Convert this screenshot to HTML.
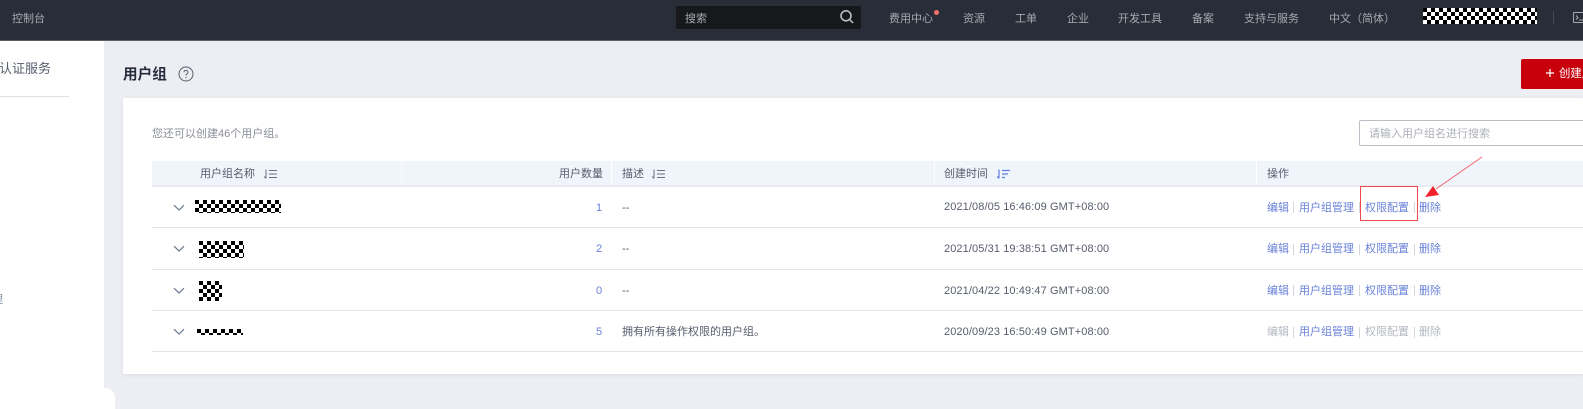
<!DOCTYPE html>
<html lang="zh-CN">
<head>
<meta charset="utf-8">
<title>用户组</title>
<style>
html,body{margin:0;padding:0}
body{width:1583px;height:409px;overflow:hidden;background:#eceef3;position:relative;font-family:"Liberation Sans","Noto Sans CJK SC",sans-serif;font-size:11px;color:#575d6c}
.a{position:absolute}
.t{position:absolute;white-space:nowrap;line-height:16px}
.nav{color:#a6a9b0;top:11px;font-size:11px}
.hd{color:#575d6c;top:166px;font-size:11px}
.ln{position:absolute;left:152px;width:1431px;height:1px;background:#e4e5e9}
.lk{color:#6a82d8}
.dis{color:#b4b8c2}
.sep{position:absolute;width:1px;height:11px;background:#d5d7dd}
.chk{position:absolute;background:conic-gradient(#fff 25%,#000 0 50%,#fff 0 75%,#000 0);background-size:8px 8px}
.num{color:#6a82d8;font-size:11px}
.blk{color:#575d6c}
.tm{letter-spacing:.1px}
</style>
</head>
<body>
<!-- Top bar -->
<div class="a" style="left:0;top:0;width:1583px;height:41px;background:#292d38;border-bottom:1px solid #5a5d66;box-sizing:border-box"></div>
<span class="t nav" style="left:12px">控制台</span>
<div class="a" style="left:676px;top:6px;width:185px;height:23px;background:#17181c;border-radius:2px"></div>
<span class="t nav" style="left:685px">搜索</span>
<svg class="a" style="left:838px;top:8px" width="18" height="18" viewBox="0 0 18 18" fill="none" stroke="#b9bcc2" stroke-width="1.6"><circle cx="8" cy="7.8" r="5"/><path d="M11.6 11.5L15 15"/></svg>
<span class="t nav" style="left:889px">费用中心</span>
<div class="a" style="left:934px;top:10px;width:5px;height:5px;border-radius:50%;background:#f66f6a"></div>
<span class="t nav" style="left:963px">资源</span>
<span class="t nav" style="left:1015px">工单</span>
<span class="t nav" style="left:1067px">企业</span>
<span class="t nav" style="left:1118px">开发工具</span>
<span class="t nav" style="left:1192px">备案</span>
<span class="t nav" style="left:1244px">支持与服务</span>
<span class="t nav" style="left:1329px">中文（简体）</span>
<div class="chk" style="left:1423px;top:8px;width:114px;height:16px"></div>
<div class="a" style="left:1553px;top:11px;width:1px;height:13px;background:#464a54"></div>
<svg class="a" style="left:1573px;top:11px" width="10" height="13" viewBox="0 0 10 13" fill="none" stroke="#a6a9b0" stroke-width="1"><path d="M.5 1.5H10M.5 11.5H10M.5 1.5V11.5M3 4.5L5 6.5L3 8.5M6 9H10"/></svg>

<!-- Sidebar -->
<div class="a" style="left:0;top:41px;width:104px;height:368px;background:#fff"></div>
<div class="a" style="left:0;top:388px;width:115px;height:21px;background:#fff;border-top-right-radius:10px"></div>
<span class="t" style="left:-1px;top:61px;font-size:13px;color:#575d6c">认证服务</span>
<div class="a" style="left:0;top:96px;width:69px;height:1px;background:#dfe1e6"></div>
<span class="t" style="left:-8px;top:292px;font-size:11px;color:#7d8aa5">理</span>

<!-- Title -->
<span class="t" style="left:123px;top:66px;font-size:14.6px;font-weight:bold;color:#252b3a;line-height:18px">用户组</span>
<svg class="a" style="left:178px;top:66px" width="16" height="16" viewBox="0 0 16 16" fill="none" stroke="#575d6c" stroke-width="1"><circle cx="8" cy="8" r="7"/><path d="M6 6.3C6 3.8 10 3.8 10 6.2C10 7.8 8 7.7 8 9.6"/><path d="M8 11v1.2"/></svg>

<!-- Create button -->
<div class="a" style="left:1521px;top:59px;width:62px;height:30px;background:#c7000b;border-radius:2px 0 0 2px"></div>
<svg class="a" style="left:1546px;top:69px" width="8" height="8" viewBox="0 0 8 8" stroke="#fff" stroke-width="1.2"><path d="M4 0V8M0 4H8"/></svg>
<span class="t" style="left:1559px;top:66px;font-size:11.4px;color:#fff">创建用户组</span>

<!-- Card -->
<div class="a" style="left:123px;top:98px;width:1460px;height:276px;background:#fff;box-shadow:0 1px 4px rgba(0,0,0,.08)"></div>
<span class="t" style="left:152px;top:126px;color:#8a8e99">您还可以创建46个用户组。</span>
<div class="a" style="left:1359px;top:120px;width:224px;height:26px;box-sizing:border-box;border:1px solid #bcbfc7;border-right:none;background:#fff;border-radius:2px 0 0 2px"></div>
<span class="t" style="left:1369px;top:126px;color:#adb0b8">请输入用户组名进行搜索</span>

<!-- Table header -->
<div class="a" style="left:152px;top:161px;width:1431px;height:24px;background:#f0f4fb"></div>
<div class="a" style="left:152px;top:185px;width:1431px;height:2px;background:#e9ebf0"></div>
<div class="a" style="left:401px;top:161px;width:1px;height:24px;background:#f7f9fd"></div>
<div class="a" style="left:611px;top:161px;width:1px;height:24px;background:#fff"></div>
<div class="a" style="left:934px;top:161px;width:1px;height:24px;background:#fff"></div>
<div class="a" style="left:1256px;top:161px;width:1px;height:24px;background:#fff"></div>
<span class="t hd" style="left:200px">用户组名称</span>
<svg class="a" style="left:263px;top:168px" width="15" height="12" viewBox="0 0 15 12" fill="none" stroke="#6b7080" stroke-width="1"><path d="M3 1.5V10M1.2 8.5L3 10.5M6 2.5H14M6 6H14M6 9.5H14"/></svg>
<span class="t hd" style="left:559px">用户数量</span>
<span class="t hd" style="left:622px">描述</span>
<svg class="a" style="left:651px;top:168px" width="15" height="12" viewBox="0 0 15 12" fill="none" stroke="#6b7080" stroke-width="1"><path d="M3 1.5V10M1.2 8.5L3 10.5M6 2.5H14M6 6H14M6 9.5H14"/></svg>
<span class="t hd" style="left:944px">创建时间</span>
<svg class="a" style="left:996px;top:168px" width="15" height="12" viewBox="0 0 15 12" fill="none" stroke="#5e7ce0" stroke-width="1.2"><path d="M3 1.5V10M1.2 8.5L3 10.5M6 2.5H14M6 6H12M6 9.5H9"/></svg>
<span class="t hd" style="left:1267px">操作</span>

<!-- Row lines -->
<div class="ln" style="top:227px"></div>
<div class="ln" style="top:269px"></div>
<div class="ln" style="top:310px"></div>
<div class="ln" style="top:351px"></div>

<!-- Chevrons -->
<svg class="a" style="left:173px;top:204px" width="12" height="8" viewBox="0 0 12 8" fill="none" stroke="#6b7a90" stroke-width="1.2"><path d="M1 1.2L6 6L11 1.2"/></svg>
<svg class="a" style="left:173px;top:245px" width="12" height="8" viewBox="0 0 12 8" fill="none" stroke="#6b7a90" stroke-width="1.2"><path d="M1 1.2L6 6L11 1.2"/></svg>
<svg class="a" style="left:173px;top:287px" width="12" height="8" viewBox="0 0 12 8" fill="none" stroke="#6b7a90" stroke-width="1.2"><path d="M1 1.2L6 6L11 1.2"/></svg>
<svg class="a" style="left:173px;top:328px" width="12" height="8" viewBox="0 0 12 8" fill="none" stroke="#6b7a90" stroke-width="1.2"><path d="M1 1.2L6 6L11 1.2"/></svg>

<!-- Masked names -->
<div class="chk" style="left:195px;top:200px;width:86px;height:13px"></div>
<div class="chk" style="left:199px;top:241px;width:45px;height:17px"></div>
<div class="chk" style="left:199px;top:281px;width:23px;height:20px"></div>
<div class="chk" style="left:197px;top:329px;width:46px;height:6px"></div>

<!-- Counts -->
<span class="t num" style="left:596px;top:200px">1</span>
<span class="t num" style="left:596px;top:241px">2</span>
<span class="t num" style="left:596px;top:283px">0</span>
<span class="t num" style="left:596px;top:324px">5</span>

<!-- Description -->
<span class="t blk" style="left:622px;top:200px">--</span>
<span class="t blk" style="left:622px;top:241px">--</span>
<span class="t blk" style="left:622px;top:283px">--</span>
<span class="t blk" style="left:622px;top:324px">拥有所有操作权限的用户组。</span>

<!-- Times -->
<span class="t blk tm" style="left:944px;top:199px">2021/08/05 16:46:09 GMT+08:00</span>
<span class="t blk tm" style="left:944px;top:241px">2021/05/31 19:38:51 GMT+08:00</span>
<span class="t blk tm" style="left:944px;top:283px">2021/04/22 10:49:47 GMT+08:00</span>
<span class="t blk tm" style="left:944px;top:324px">2020/09/23 16:50:49 GMT+08:00</span>

<!-- Row 1 actions -->
<span class="t lk" style="left:1267px;top:200px">编辑</span><div class="sep" style="left:1293px;top:202px"></div>
<span class="t lk" style="left:1299px;top:200px">用户组管理</span><div class="sep" style="left:1359px;top:202px"></div>
<span class="t lk" style="left:1365px;top:200px">权限配置</span><div class="sep" style="left:1414px;top:202px"></div>
<span class="t lk" style="left:1419px;top:200px">删除</span>
<!-- Row 2 actions -->
<span class="t lk" style="left:1267px;top:241px">编辑</span><div class="sep" style="left:1293px;top:244px"></div>
<span class="t lk" style="left:1299px;top:241px">用户组管理</span><div class="sep" style="left:1359px;top:244px"></div>
<span class="t lk" style="left:1365px;top:241px">权限配置</span><div class="sep" style="left:1414px;top:244px"></div>
<span class="t lk" style="left:1419px;top:241px">删除</span>
<!-- Row 3 actions -->
<span class="t lk" style="left:1267px;top:283px">编辑</span><div class="sep" style="left:1293px;top:285px"></div>
<span class="t lk" style="left:1299px;top:283px">用户组管理</span><div class="sep" style="left:1359px;top:285px"></div>
<span class="t lk" style="left:1365px;top:283px">权限配置</span><div class="sep" style="left:1414px;top:285px"></div>
<span class="t lk" style="left:1419px;top:283px">删除</span>
<!-- Row 4 actions -->
<span class="t dis" style="left:1267px;top:324px">编辑</span><div class="sep" style="left:1293px;top:327px"></div>
<span class="t lk" style="left:1299px;top:324px">用户组管理</span><div class="sep" style="left:1359px;top:327px"></div>
<span class="t dis" style="left:1365px;top:324px">权限配置</span><div class="sep" style="left:1414px;top:327px"></div>
<span class="t dis" style="left:1419px;top:324px">删除</span>

<!-- Annotation -->
<div class="a" style="left:1360px;top:186px;width:58px;height:35px;box-sizing:border-box;border:1px solid #f0484e"></div>
<svg class="a" style="left:1420px;top:150px" width="70" height="50" viewBox="0 0 70 50" fill="none"><path d="M62 7L16 39" stroke="#f0606a" stroke-width="1"/><path d="M5 47L13 36L19 45Z" fill="#f5222d"/></svg>
</body>
</html>
